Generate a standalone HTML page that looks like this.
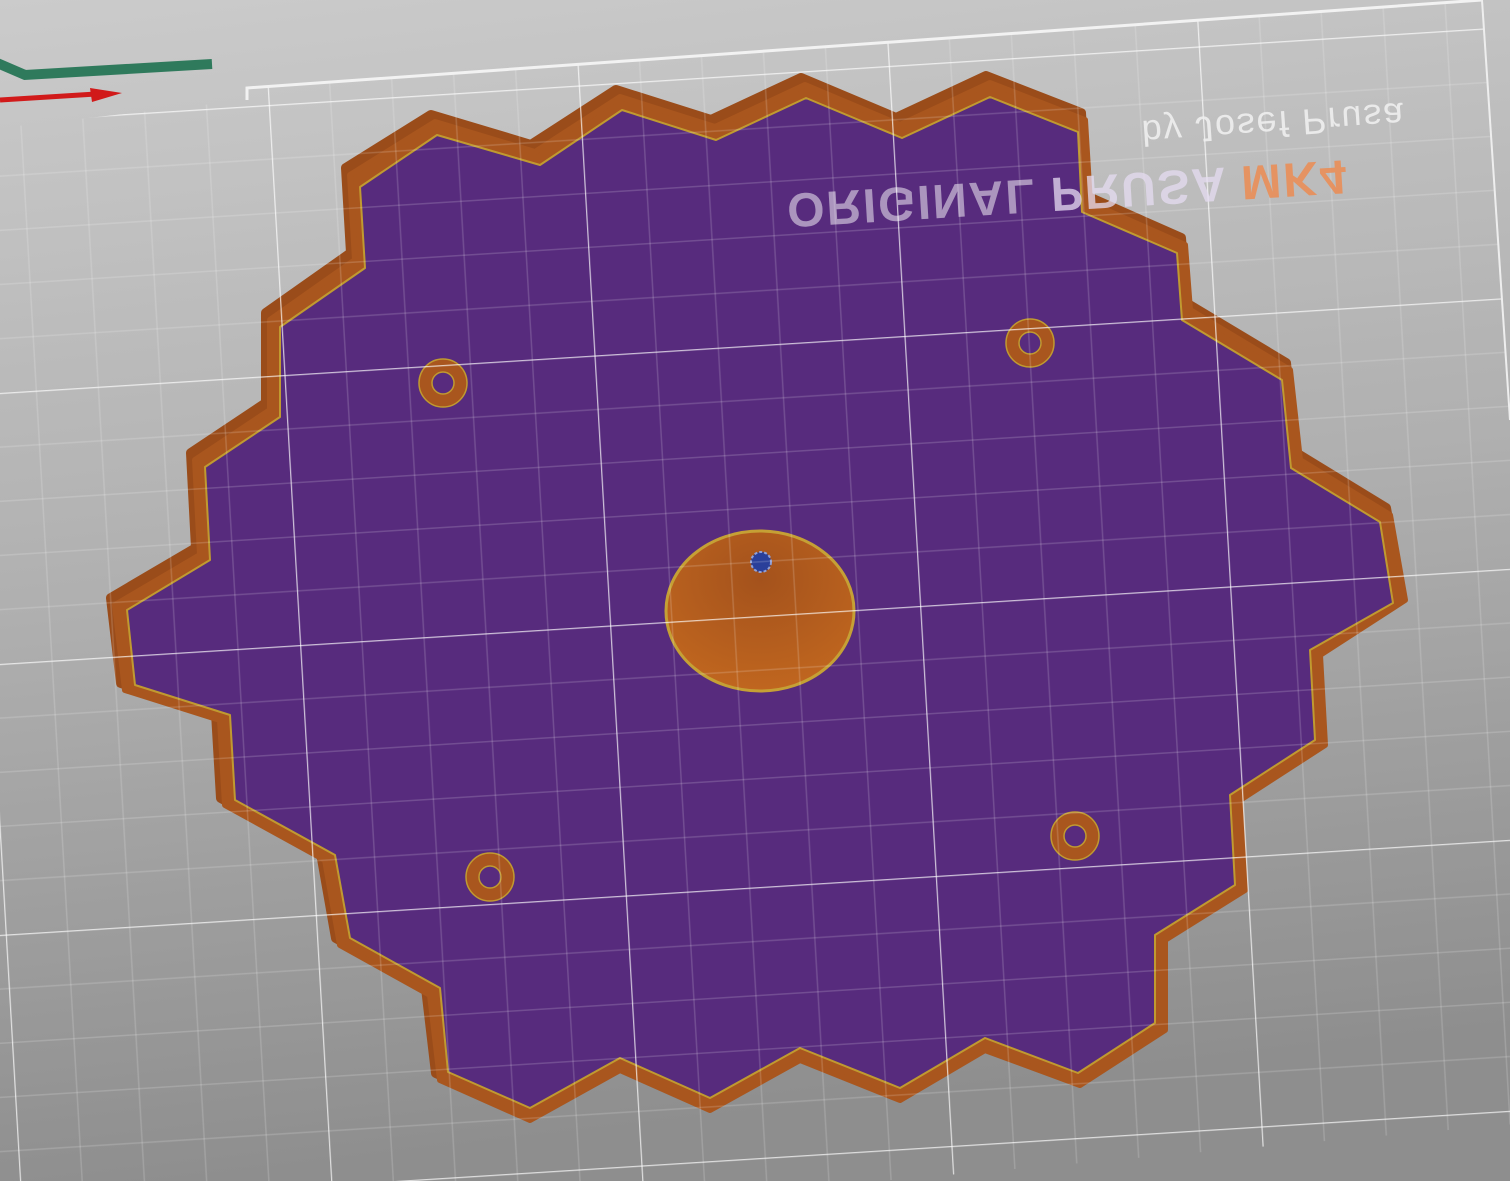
<!DOCTYPE html>
<html><head><meta charset="utf-8"><style>
html,body{margin:0;padding:0;width:1510px;height:1181px;overflow:hidden;background:#aaa}
svg{display:block;position:absolute;left:0;top:0}
</style></head><body>
<svg width="1510" height="1181" viewBox="0 0 1510 1181" xmlns="http://www.w3.org/2000/svg">
<defs>
<linearGradient id="bg" x1="0" y1="0" x2="0.15" y2="1">
<stop offset="0" stop-color="#cbcbcb"/><stop offset="0.5" stop-color="#b0b0b0"/><stop offset="1" stop-color="#8e8e8e"/>
</linearGradient>
<pattern id="grid" patternUnits="userSpaceOnUse" width="310" height="270" patternTransform="matrix(1,-0.063,0.058,1,300,645)">
<g stroke="#ffffff" fill="none">
<g stroke-opacity="0.16" stroke-width="1.5">
<line x1="62" y1="0" x2="62" y2="270"/><line x1="124" y1="0" x2="124" y2="270"/><line x1="186" y1="0" x2="186" y2="270"/><line x1="248" y1="0" x2="248" y2="270"/>
<line x1="0" y1="54" x2="310" y2="54"/><line x1="0" y1="108" x2="310" y2="108"/><line x1="0" y1="162" x2="310" y2="162"/><line x1="0" y1="216" x2="310" y2="216"/>
</g>
<g stroke-opacity="0.7" stroke-width="2.5">
<line x1="0" y1="0" x2="0" y2="270"/><line x1="0" y1="0" x2="310" y2="0"/>
</g>
</g>
</pattern>
<radialGradient id="cone" cx="0.5" cy="0.3" r="0.7">
<stop offset="0" stop-color="#a4521c"/><stop offset="1" stop-color="#c0661f"/>
</radialGradient>
<clipPath id="bed"><polygon points="0,128 247,100 247,88 1482,0 1560,1120 0,1260"/></clipPath>
</defs>
<rect width="1510" height="1181" fill="url(#bg)"/>

<polygon transform="translate(-4,-7)" fill="#9a4c1a" stroke="#9a4c1a" stroke-width="10" stroke-linejoin="round"
points="350,175 435,122 535,152 620,97 715,127 805,85 900,125 990,83 1085,120 1090,203 1185,245 1190,310 1290,370 1300,460 1390,515 1405,600 1320,655 1325,745 1240,800 1245,890 1165,940 1165,1030 1080,1085 985,1050 900,1100 800,1060 710,1110 620,1070 530,1120 440,1080 430,995 340,945 325,860 225,805 220,720 125,690 115,605 200,555 195,460 270,410 270,320 355,260"/>
<polygon fill="#a9561e" stroke="#a9561e" stroke-width="6" stroke-linejoin="round"
points="350,175 435,122 535,152 620,97 715,127 805,85 900,125 990,83 1085,120 1090,203 1185,245 1190,310 1290,370 1300,460 1390,515 1405,600 1320,655 1325,745 1240,800 1245,890 1165,940 1165,1030 1080,1085 985,1050 900,1100 800,1060 710,1110 620,1070 530,1120 440,1080 430,995 340,945 325,860 225,805 220,720 125,690 115,605 200,555 195,460 270,410 270,320 355,260"/>
<polygon fill="#572b7d" stroke="#c09a30" stroke-width="2" stroke-linejoin="round"
points="360,187 437,135 540,165 622,110 716,140 806,98 902,138 990,97 1078,132 1082,212 1177,253 1182,320 1282,380 1291,468 1380,522 1393,603 1310,650 1315,740 1230,795 1235,885 1155,935 1155,1023 1078,1073 985,1038 900,1088 800,1048 710,1098 620,1058 530,1108 448,1072 440,988 350,938 335,855 235,800 230,715 135,685 127,610 210,560 205,467 280,417 280,327 365,268"/>

<g stroke="#c09a30" stroke-width="1.5">
<circle cx="443" cy="383" r="24" fill="#a9561e"/><circle cx="443" cy="383" r="11" fill="#582b7e"/>
<circle cx="1030" cy="343" r="24" fill="#a9561e"/><circle cx="1030" cy="343" r="11" fill="#582b7e"/>
<circle cx="490" cy="877" r="24" fill="#a9561e"/><circle cx="490" cy="877" r="11" fill="#582b7e"/>
<circle cx="1075" cy="836" r="24" fill="#a9561e"/><circle cx="1075" cy="836" r="11" fill="#582b7e"/>
</g>
<ellipse cx="760" cy="611" rx="94" ry="80" fill="url(#cone)" stroke="#c5a035" stroke-width="3"/>
<circle cx="761" cy="562" r="10" fill="#2a3f9a" stroke="#8fa0d8" stroke-width="2" stroke-dasharray="3 2"/>

<rect width="1510" height="1181" fill="url(#grid)" clip-path="url(#bed)"/>
<polyline points="247,100 247,88 1482,0" fill="none" stroke="#f2f2f2" stroke-width="3"/>
<line x1="1482" y1="0" x2="1510" y2="420" stroke="#eee" stroke-width="2"/>

<g transform="translate(1070,165) rotate(-3.5) scale(1,-1)" font-family="Liberation Sans, sans-serif" font-weight="bold" font-size="48">
<text x="-285" y="-12" textLength="560"><tspan fill="#ffffff" fill-opacity="0.5">ORIGINAL </tspan><tspan fill="#e6dcf2" fill-opacity="0.75">PRUSA </tspan><tspan fill="#e98e58" fill-opacity="0.9">MK4</tspan></text>
</g>
<g transform="translate(1270,100) rotate(-4) scale(1,-1)" font-family="Liberation Sans, sans-serif" font-size="36" fill="#efefef" opacity="0.9">
<text x="-130" y="-12" textLength="262">by Josef Prusa</text>
</g>

<polyline points="-5,62 25,75 212,64" fill="none" stroke="#2f7a5c" stroke-width="10"/>
<line x1="0" y1="100" x2="96" y2="94" stroke="#d11a1a" stroke-width="5"/>
<polygon points="90,88 122,93 92,102" fill="#d11a1a"/>
</svg>
</body></html>
